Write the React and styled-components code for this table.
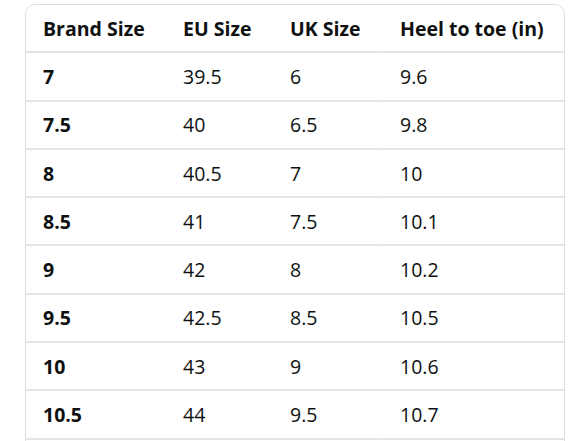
import styled, { createGlobalStyle } from "styled-components";

const Global = createGlobalStyle`
    body {
        margin: 0;
        background: #fff;
        font-family: "Open Sans", "Noto Sans", sans-serif;
        color: #0f1111;
    }
`
const Page = styled.div`
    padding: 4px 25px 0 25px;
`
const Wrap = styled.div`
    width: 538px;
    border: 1px solid #dcdfdf;
    border-radius: 10px;
    overflow: hidden;
`
const Table = styled.table`
    width: 100%;
    border-collapse: separate;
    border-spacing: 0;
    table-layout: fixed;
`
const Cell = styled.td`
    height: 46.3px;
    padding: 0 0 0 17px;
    font-size: 19.5px;
    font-weight: ${(p) => (p.$bold ? 700 : 400)};
    text-align: left;
    border-bottom: 2px solid #e3e5e5;
    white-space: nowrap;
    &:last-child {
        border-left: 1px solid #fff;
    }
`

const rows = [
    ["7", "39.5", "6", "9.6"],
    ["7.5", "40", "6.5", "9.8"],
    ["8", "40.5", "7", "10"],
    ["8.5", "41", "7.5", "10.1"],
    ["9", "42", "8", "10.2"],
    ["9.5", "42.5", "8.5", "10.5"],
    ["10", "43", "9", "10.6"],
    ["10.5", "44", "9.5", "10.7"],
    ["11", "45", "10", "11"],
]

function App() {
    return (
        <>
            <Global />
            <Page>
                <Wrap>
                    <Table>
                        <colgroup>
                            <col style={{ width: 140 }} />
                            <col style={{ width: 107 }} />
                            <col style={{ width: 109 }} />
                            <col />
                        </colgroup>
                        <thead>
                            <tr>
                                <Cell as="th" $bold>Brand Size</Cell>
                                <Cell as="th" $bold>EU Size</Cell>
                                <Cell as="th" $bold>UK Size</Cell>
                                <Cell as="th" $bold>Heel to toe (in)</Cell>
                            </tr>
                        </thead>
                        <tbody>
                            {rows.map((r, i) => (
                                <tr key={i}>
                                    <Cell $bold>{r[0]}</Cell>
                                    <Cell>{r[1]}</Cell>
                                    <Cell>{r[2]}</Cell>
                                    <Cell>{r[3]}</Cell>
                                </tr>
                            ))}
                        </tbody>
                    </Table>
                </Wrap>
            </Page>
        </>
    );
}

export default App
